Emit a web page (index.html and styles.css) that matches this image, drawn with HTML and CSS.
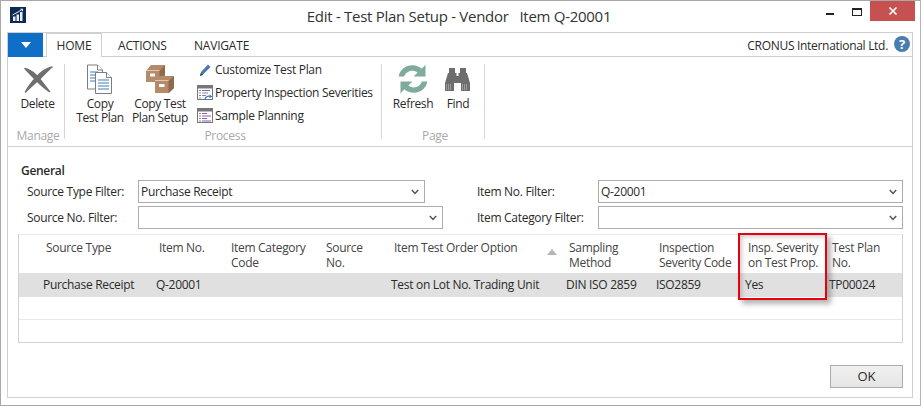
FILE: index.html
```html
<!DOCTYPE html>
<html lang="en">
<head>
<meta charset="utf-8">
<title>Edit - Test Plan Setup - Vendor Item Q-20001</title>
<link rel="stylesheet" href="styles.css">
</head>
<body>
<div class="window">
  <header class="titlebar">
    <svg class="app-logo" width="16" height="16" viewBox="0 0 16 16">
      <rect width="16" height="16" fill="#0b2a55"/>
      <path d="M3 14V9.5h2.5V14zM6.5 14V7.5H9V14zM10 14V5h2.5v9z" fill="#e8edf3"/>
      <path d="M2.5 8L9 4.5l2.5-2" fill="none" stroke="#e8edf3" stroke-width="1"/>
      <path d="M10 1.8h3v3z" fill="#e8edf3"/>
    </svg>
    <div class="title">Edit - Test Plan Setup - Vendor&nbsp;&nbsp; Item Q-20001</div>
    <div class="win-controls">
      <span class="win-min"></span>
      <span class="win-max"></span>
      <span class="win-close">
        <svg width="10" height="10" viewBox="0 0 10 10"><path d="M1.5 1.5l7 7M8.5 1.5l-7 7" stroke="#fff" stroke-width="1.7"/></svg>
      </span>
    </div>
  </header>

  <div class="frame">
    <nav class="tabs">
      <div class="app-menu"><svg width="10" height="6" viewBox="0 0 10 6"><path d="M0 0h10L5 6z" fill="#fff"/></svg></div>
      <div class="tab tab-active">HOME</div>
      <div class="tab tab-actions">ACTIONS</div>
      <div class="tab tab-navigate">NAVIGATE</div>
      <div class="company">CRONUS International Ltd.</div>
      <div class="help">?</div>
    </nav>

    <section class="ribbon">
      <div class="group group-manage">
        <div class="group-body">
          <div class="big-btn btn-delete">
            <svg class="big-icon" width="30" height="30" viewBox="0 0 30 30">
              <path d="M2 4.500C8 6 13 10.500 17 15.500S23.500 24 26.500 27.500C22 25 17.500 20.500 13.500 16.500S5.500 8.500 2 4.500z" fill="#6f6f6f" stroke="#6f6f6f" stroke-width="1.600" stroke-linejoin="round"/>
              <path d="M29 3C23 4.500 18 8 13.500 13S5.500 22 2.500 28C6.500 24 11 20 15 16.500S24 7 29 3z" fill="#6f6f6f" stroke="#6f6f6f" stroke-width="1.600" stroke-linejoin="round"/>
            </svg>
            <span>Delete</span>
          </div>
        </div>
        <div class="group-label">Manage</div>
      </div>

      <div class="group group-process">
        <div class="group-body">
          <div class="big-btn btn-copy">
            <svg class="big-icon" width="30" height="30" viewBox="0 0 30 30">
              <path d="M2.500 1h10l5 5v19h-15z" fill="#fff" stroke="#7d7d7d"/>
              <path d="M12.500 1v5h5" fill="#fff" stroke="#7d7d7d"/>
              <path d="M5 8h8M5 11h8M5 14h8M5 17h8" stroke="#3f7fbf"/>
              <path d="M10.500 8.500h11l5 5v16h-16z" fill="#fff" stroke="#7d7d7d"/>
              <path d="M21.500 8.500v5h5" fill="#fff" stroke="#7d7d7d"/>
              <path d="M13 16h11M13 19h11M13 22h11M13 25h11" stroke="#3f7fbf"/>
            </svg>
            <span>Copy<br>Test Plan</span>
          </div>
          <div class="big-btn btn-copy-setup">
            <svg class="big-icon" width="30" height="30" viewBox="0 0 30 30">
              <path d="M1 7l5-6h14v11l-5 6H1z" fill="#b48a68"/>
              <path d="M14.500 7L20 1v10l-5.500 6z" fill="#8f6a4c"/>
              <path d="M1 6.500h13.500" stroke="#e6d8cc" stroke-width=".8"/>
              <path d="M5 9.500h5v3H5z" fill="#fff"/>
              <path d="M10 17l5-5h14v12l-5 5H10z" fill="#b48a68"/>
              <path d="M23.500 17L29 12v12l-5.500 5z" fill="#8f6a4c"/>
              <path d="M10 16.500h13.500" stroke="#e6d8cc" stroke-width=".8"/>
              <path d="M14 20h5.500v3H14z" fill="#fff"/>
            </svg>
            <span>Copy Test<br>Plan Setup</span>
          </div>
          <div class="small-list">
            <div class="small-btn">
              <svg width="16" height="16" viewBox="0 0 16 16"><path d="M3 14l1-4 7-7.500 2.500 2.500L6 12.500z" fill="#4a79ad"/><path d="M3 14l1-3 2 2z" fill="#23486f"/></svg>
              <span>Customize Test Plan</span>
            </div>
            <div class="small-btn">
              <svg width="16" height="16" viewBox="0 0 16 16">
                <rect x=".5" y=".5" width="15" height="14" fill="#fff" stroke="#777"/>
                <path d="M1 1h14v2.500H1z" fill="#777"/>
                <path d="M2 5.500h2M2 8h2M2 10.500h2M2 13h2" stroke="#8a8a8a"/>
                <path d="M5 5.500h8" stroke="#8a5fb0"/><path d="M5 8h6M5 10.500h4" stroke="#888"/>
                <path d="M8 14c1-3 4-3.500 6-2" fill="none" stroke="#3f7fbf" stroke-width="1.300"/>
                <path d="M12.500 9.500l3 2-3 1.500z" fill="#3f7fbf"/>
              </svg>
              <span>Property Inspection Severities</span>
            </div>
            <div class="small-btn">
              <svg width="16" height="16" viewBox="0 0 16 16">
                <rect x=".5" y=".5" width="15" height="14" fill="#fff" stroke="#777"/>
                <path d="M1 1h14v2.500H1z" fill="#777"/>
                <path d="M2 5.500h2M2 8h2M2 10.500h2M2 13h2" stroke="#8a8a8a"/>
                <path d="M5 5.500h5M5 8h9M5 10.500h5M5 13h9" stroke="#8a5fb0"/>
              </svg>
              <span>Sample Planning</span>
            </div>
          </div>
        </div>
        <div class="group-label">Process</div>
      </div>

      <div class="group group-page">
        <div class="group-body">
          <div class="big-btn btn-refresh">
            <svg class="big-icon" width="30" height="30" viewBox="3 3 24 24">
              <path d="M3.500 13C4.500 7.500 9 4 14.500 4c3 0 5.500 1 7.500 2.800L25 3.500V13h-9.500l3.200-3.200C17.500 8.800 16 8.300 14.500 8.300c-3.200 0-5.800 2-6.600 4.700z" fill="#7fab9c"/>
              <path d="M26.500 17c-1 5.500-5.500 9-11 9-3 0-5.500-1-7.500-2.800L5 26.500V17h9.500l-3.200 3.200c1.200 1 2.700 1.500 4.200 1.500 3.200 0 5.800-2 6.600-4.700z" fill="#7fab9c"/>
            </svg>
            <span>Refresh</span>
          </div>
          <div class="big-btn btn-find">
            <svg class="big-icon" width="30" height="30" viewBox="0 0 30 30">
              <path d="M6 4h6v5H6zM17 4h6v5h-6z" fill="#6e6e6e"/>
              <path d="M5 9h8.500v3h2V9H24l3 10v8h-9v-8h-7v8H2v-8z" fill="#6e6e6e"/>
              <path d="M3.500 20v6M5.500 20v6M7.500 20v6M19.500 20v6M21.500 20v6M23.500 20v6" stroke="#bdbdbd" stroke-width=".6"/>
            </svg>
            <span>Find</span>
          </div>
        </div>
        <div class="group-label">Page</div>
      </div>
    </section>

    <main class="content">
      <h2 class="section-title">General</h2>
      <div class="filters">
        <div class="filter-col">
          <div class="filter">
            <label class="filter-label">Source Type Filter:</label>
            <div class="select select-short"><span>Purchase Receipt</span><svg class="chev" width="8" height="6" viewBox="0 0 8 6"><path d="M.8 1L4 4.500 7.200 1" fill="none" stroke="#555" stroke-width="1.500"/></svg></div>
          </div>
          <div class="filter">
            <label class="filter-label">Source No. Filter:</label>
            <div class="select"><span></span><svg class="chev" width="8" height="6" viewBox="0 0 8 6"><path d="M.8 1L4 4.500 7.200 1" fill="none" stroke="#555" stroke-width="1.500"/></svg></div>
          </div>
        </div>
        <div class="filter-col filter-col-right">
          <div class="filter">
            <label class="filter-label">Item No. Filter:</label>
            <div class="select"><span>Q-20001</span><svg class="chev" width="8" height="6" viewBox="0 0 8 6"><path d="M.8 1L4 4.500 7.200 1" fill="none" stroke="#555" stroke-width="1.500"/></svg></div>
          </div>
          <div class="filter">
            <label class="filter-label">Item Category Filter:</label>
            <div class="select"><span></span><svg class="chev" width="8" height="6" viewBox="0 0 8 6"><path d="M.8 1L4 4.500 7.200 1" fill="none" stroke="#555" stroke-width="1.500"/></svg></div>
          </div>
        </div>
      </div>

      <div class="grid">
        <div class="grid-row grid-head">
          <div class="cell first">Source Type</div>
          <div class="cell">Item No.</div>
          <div class="cell">Item Category Code</div>
          <div class="cell">Source No.</div>
          <div class="cell sorted">Item Test Order Option<svg class="sort" width="10" height="6" viewBox="0 0 10 6"><path d="M0 6L5 0l5 6z" fill="#b5b5b5"/></svg></div>
          <div class="cell">Sampling Method</div>
          <div class="cell">Inspection Severity Code</div>
          <div class="cell">Insp. Severity on Test Prop.</div>
          <div class="cell">Test Plan No.</div>
        </div>
        <div class="grid-row grid-selected">
          <div class="cell first">Purchase Receipt</div>
          <div class="cell">Q-20001</div>
          <div class="cell"></div>
          <div class="cell"></div>
          <div class="cell">Test on Lot No. Trading Unit</div>
          <div class="cell">DIN ISO 2859</div>
          <div class="cell">ISO2859</div>
          <div class="cell">Yes</div>
          <div class="cell">TP00024</div>
        </div>
        <div class="grid-empty"></div>
        <div class="grid-empty grid-empty-last"></div>
        <div class="callout"></div>
      </div>

      <footer class="actions">
        <div class="ok-btn">OK</div>
      </footer>
    </main>
  </div>
</div>
</body>
</html>
```

FILE: styles.css
```css
* { box-sizing: border-box; }
html, body { margin: 0; padding: 0; }
body {
  width: 921px;
  height: 406px;
  background: #fff;
  font-family: "Open Sans", "Noto Sans", "Liberation Sans", sans-serif;
  font-size: 12px;
  color: #2a2a2a;
  overflow: hidden;
}
.window {
  width: 921px;
  height: 406px;
  background: #fff;
  border: 1px solid #a8a8a8;
  border-right-color: #b5b5b5;
  padding: 0 7px 7px 6px;
  display: flex;
  flex-direction: column;
}
.titlebar {
  height: 31px;
  flex: none;
  display: flex;
  align-items: flex-start;
  position: relative;
}
.app-logo { margin: 6px 0 0 3px; flex: none; }
.title {
  flex: 1;
  text-align: center;
  font-size: 15px;
  line-height: 30px;
  padding-left: 66px;
  color: #333;
  letter-spacing: -.28px;
}
.win-controls { display: flex; align-items: flex-start; height: 20px; flex: none; margin-right: -2px; }
.win-min { width: 8px; height: 2px; background: #222; margin: 12px 18px 0 0; }
.win-max { width: 10px; height: 8px; border: 1px solid #222; border-top-width: 2px; margin: 7px 8px 0 0; }
.win-close {
  width: 45px;
  height: 20px;
  background: #c75050;
  display: flex;
  align-items: center;
  justify-content: center;
}
.frame {
  flex: 1;
  border: 1px solid #cfcfcf;
  display: flex;
  flex-direction: column;
  min-height: 0;
}
.tabs {
  height: 24px;
  flex: none;
  display: flex;
  align-items: stretch;
  font-size: 12px;
  line-height: 25px;
  border-bottom: 1px solid #cfcfcf;
}
.app-menu {
  width: 35px;
  background: #0f6fc6;
  display: flex;
  align-items: center;
  justify-content: center;
  margin-bottom: -1px;
  flex: none;
}
.tab { flex: none; text-align: center; letter-spacing: -.2px; }
.tab-active {
  margin-left: 3px;
  width: 56px;
  height: 24px;
  background: #fff;
  border: 1px solid #cfcfcf;
  border-bottom: 0;
  line-height: 24px;
}
.tab-actions { width: 74px; margin-left: 4px; text-align: left; padding-left: 12px; }
.tab-navigate { width: 87px; margin-left: 0; text-align: left; padding-left: 14px; }
.company { margin-left: auto; letter-spacing: -.3px; }
.help {
  width: 16px;
  height: 16px;
  margin: 3px 2px 0 6px;
  border-radius: 50%;
  background: #4a7cb0;
  color: #fff;
  font: bold 13px/16px "Open Sans", sans-serif;
  text-align: center;
}
.ribbon {
  height: 90px;
  flex: none;
  display: flex;
  border-bottom: 1px solid #d2d2d2;
  padding-top: 7px;
}
.group {
  display: flex;
  flex-direction: column;
  height: 75px;
  border-right: 1px solid #d5d5d5;
  flex: none;
  position: relative;
}
.group-manage { width: 57px; }
.group-process { width: 317px; }
.group-page { width: 103px; }
.group-body { flex: 1; display: flex; min-height: 0; }
.group-label {
  flex: none;
  text-align: center;
  color: #a9a9a9;
  font-size: 12px;
  line-height: 16px;
  letter-spacing: -.3px;
  padding-left: 4px;
  margin-bottom: -5px;
}
.big-btn {
  display: flex;
  flex-direction: column;
  align-items: center;
  text-align: center;
  line-height: 14px;
  letter-spacing: -.35px;
  white-space: nowrap;
}
.big-btn span { margin-top: 3px; }
.big-icon { display: block; flex: none; }
.btn-delete { width: 47px; margin-left: 6px; }
.btn-copy { width: 60px; margin-left: 5px; }
.btn-copy-setup { width: 62px; margin-left: -1px; }
.small-list {
  display: flex;
  flex-direction: column;
  gap: 6px;
  margin: -3px 0 0 6px;
}
.small-btn {
  display: flex;
  align-items: center;
  gap: 2px;
  height: 17px;
  line-height: 16px;
  white-space: nowrap;
  letter-spacing: -.3px;
}
.btn-refresh { width: 46px; margin-left: 8px; }
.btn-find { width: 44px; margin-left: 0; }
.content {
  flex: 1;
  display: flex;
  flex-direction: column;
  min-height: 0;
  padding: 0 9px 0 10px;
}
.section-title {
  margin: 17px 0 0 3px;
  font-size: 12px;
  line-height: 14px;
  font-weight: 600;
  letter-spacing: -.3px;
}
.filters { display: flex; margin-top: 2px; }
.filter-col { width: 459px; display: flex; flex-direction: column; gap: 3px; flex: none; }
.filter-col-right { flex: 1; width: auto; }
.filter { display: flex; align-items: center; height: 23px; }
.filter-label {
  flex: none;
  width: 111px;
  margin-left: 9px;
  letter-spacing: -.3px;
}
.filter-col-right .filter-label { width: 121px; margin-left: 0; }
.select {
  flex: 1;
  height: 23px;
  border: 1px solid #acacac;
  background: #fff;
  display: flex;
  align-items: center;
  justify-content: space-between;
  padding: 0 5px 0 2px;
  letter-spacing: -.3px;
}
.filter-col:first-child .select { margin-right: 34px; }
.filter-col:first-child .select-short { margin-right: 52px; }
.chev { flex: none; }
.grid {
  position: relative;
  margin-top: 5px;
  height: 109px;
  border: 1px solid #d2d2d2;
  border-top-color: #eaeaea;
  flex: none;
}
.grid-row {
  display: grid;
  grid-template-columns: 134px 72px 95px 68px 175px 90px 89px 84px 1fr;
  letter-spacing: -.3px;
}
.grid-head { height: 38px; padding-top: 5px; line-height: 15px; color: #444; }
.grid-head .cell { padding-left: 6px; padding-right: 4px; }
.grid-head .first { padding-left: 27px; }
.grid-selected { height: 24px; background: #e0e0e0; line-height: 24px; white-space: nowrap; }
.grid-selected .cell { padding-left: 3px; }
.grid-selected .first { padding-left: 24px; }
.sorted { position: relative; }
.sort { position: absolute; right: 6px; top: 9px; }
.grid-empty { height: 23px; border-bottom: 1px solid #e8e8e8; }
.grid-empty-last { border-bottom: 0; }
.callout {
  position: absolute;
  left: 719px;
  top: -2px;
  width: 89px;
  height: 67px;
  border: 2px solid #e8000f;
  box-shadow: 4px 4px 5px rgba(90, 90, 90, .45), inset 3px 3px 4px -1px rgba(90, 90, 90, .3);
}
.actions { display: flex; justify-content: flex-end; margin-top: 22px; }
.ok-btn {
  width: 73px;
  height: 23px;
  border: 1px solid #acacac;
  background: linear-gradient(#f0f0f0, #e5e5e5);
  text-align: center;
  line-height: 21px;
  font-size: 13px;
}
```
